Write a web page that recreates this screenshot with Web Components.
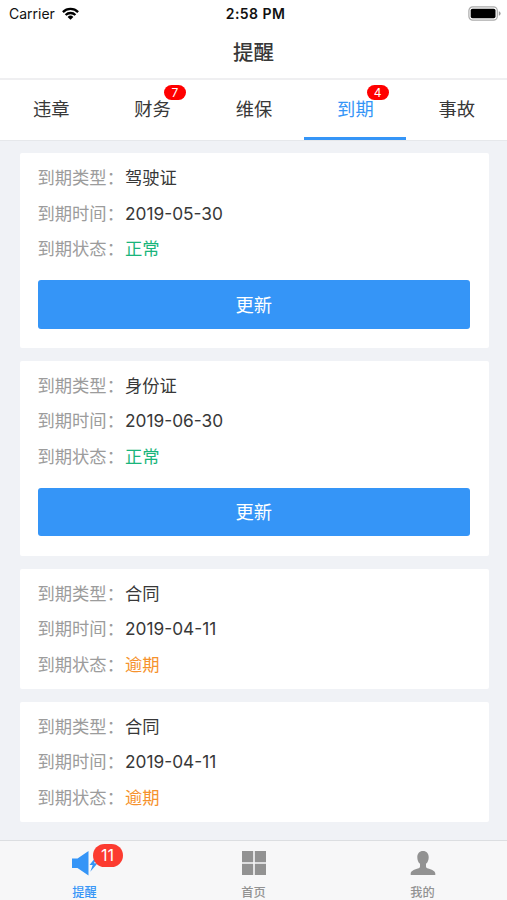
<!DOCTYPE html>
<html lang="zh-CN">
<head>
<meta charset="UTF-8">
<meta name="viewport" content="width=device-width, initial-scale=1">
<title>提醒</title>
<style>
    html, body {
        height: 100%;
        margin: 0;
    }
    body {
        font-family: Inter, "Noto Sans CJK SC", sans-serif;
        color: #383838;
        overflow: hidden;
    }
</style>
</head>
<body>
<reminder-app>
    <status-bar slot="header"></status-bar>
    <nav-title slot="header">提醒</nav-title>
    <tab-strip slot="header">
        <tab-item>违章</tab-item>
        <tab-item badge="7">财务</tab-item>
        <tab-item>维保</tab-item>
        <tab-item badge="4" active>到期</tab-item>
        <tab-item>事故</tab-item>
    </tab-strip>

    <expiry-card type="驾驶证" date="2019-05-30" status="正常" action="更新"></expiry-card>
    <expiry-card type="身份证" date="2019-06-30" status="正常" action="更新"></expiry-card>
    <expiry-card type="合同" date="2019-04-11" status="逾期" overdue></expiry-card>
    <expiry-card type="合同" date="2019-04-11" status="逾期" overdue></expiry-card>

    <bottom-bar slot="footer">
        <bottom-item icon="horn" badge="11" active>提醒</bottom-item>
        <bottom-item icon="grid">首页</bottom-item>
        <bottom-item icon="person">我的</bottom-item>
    </bottom-bar>
</reminder-app>

<script>
class ReminderApp extends HTMLElement {
    constructor() {
        super();
        this.attachShadow({ mode: 'open' });
        this.shadowRoot.innerHTML = `
            <style>
                :host {
                    display: flex;
                    flex-direction: column;
                    height: 900px;
                    background: #f0f2f6;
                }
                main {
                    flex: 1;
                    min-height: 0;
                    box-sizing: border-box;
                    display: flex;
                    flex-direction: column;
                    gap: 12.7px;
                    padding: 12.2px 18px 0 19.5px;
                }
            </style>
            <slot name="header"></slot>
            <main><slot></slot></main>
            <slot name="footer"></slot>
        `;
    }
}

class StatusBar extends HTMLElement {
    constructor() {
        super();
        this.attachShadow({ mode: 'open' });
        this.shadowRoot.innerHTML = `
            <style>
                :host {
                    display: grid;
                    grid-template-columns: 1fr auto 1fr;
                    align-items: center;
                    height: 27px;
                    padding: 0 6px 0 9px;
                    background: #fff;
                    color: #111;
                    font-size: 14px;
                    line-height: 27px;
                }
                .left {
                    display: flex;
                    align-items: center;
                    gap: 7px;
                }
                .time {
                    font-size: 14px;
                    font-weight: 600;
                    letter-spacing: 0.45px;
                    padding-left: 1px;
                }
                .battery {
                    justify-self: end;
                }
                svg {
                    display: block;
                }
            </style>
            <div class="left">
                <span>Carrier</span>
                <svg width="17" height="13" viewBox="0 0 17 13" fill="none" stroke="#000" stroke-width="2.3">
                    <path d="M.9 5.1a10.8 10.8 0 0 1 15.2 0M3.6 8a7 7 0 0 1 9.8 0"/>
                    <path d="M5.6 9.9a4.1 4.1 0 0 1 5.8 0L8.5 12.8Z" fill="#000" stroke="none"/>
                </svg>
            </div>
            <span class="time">2:58 PM</span>
            <svg class="battery" width="33" height="15" viewBox="0 0 33 15">
                <rect x=".9" y=".9" width="28.4" height="13.2" rx="3.8" fill="#fff" stroke="#aaa" stroke-width="1.2"/>
                <rect x="2.7" y="2.7" width="24.8" height="9.6" rx="1.8" fill="#000"/>
                <path d="M30.8 5.2q1.8.5 1.8 2.3t-1.8 2.3Z" fill="#999"/>
            </svg>
        `;
    }
}

class NavTitle extends HTMLElement {
    constructor() {
        super();
        this.attachShadow({ mode: 'open' });
        this.shadowRoot.innerHTML = `
            <style>
                :host {
                    display: block;
                    box-sizing: border-box;
                    height: 53px;
                    border-bottom: 2px solid #efeff1;
                    background: #fff;
                    font-size: 20.5px;
                    font-weight: 500;
                    line-height: 52px;
                    text-align: center;
                }
            </style>
            <slot></slot>
        `;
    }
}

class TabStrip extends HTMLElement {
    constructor() {
        super();
        this.attachShadow({ mode: 'open' });
        this.shadowRoot.innerHTML = `
            <style>
                :host {
                    display: grid;
                    grid-template-columns: repeat(5, 1fr);
                    grid-template-rows: 60px;
                    height: 60px;
                    border-bottom: 1px solid #e6e8eb;
                    background: #fff;
                }
            </style>
            <slot></slot>
        `;
    }
}

class TabItem extends HTMLElement {
    constructor() {
        super();
        this.attachShadow({ mode: 'open' });
        const badge = this.getAttribute('badge');
        this.shadowRoot.innerHTML = `
            <style>
                :host {
                    display: block;
                    box-sizing: border-box;
                    border-bottom: 3px solid transparent;
                    padding-left: 1px;
                    font-size: 18.3px;
                    line-height: 59px;
                    text-align: center;
                }
                :host([active]) {
                    color: #3595f7;
                    border-bottom-color: #3595f7;
                }
                .label {
                    position: relative;
                    display: inline-block;
                    height: 57px;
                }
                .badge {
                    position: absolute;
                    top: 5px;
                    right: -15px;
                    width: 22px;
                    height: 15px;
                    border-radius: 8px;
                    background: #f00;
                    color: #fff;
                    font-size: 12px;
                    line-height: 15px;
                }
            </style>
            <span class="label"><slot></slot>${badge ? `<span class="badge">${badge}</span>` : ''}</span>
        `;
    }
}

class ExpiryCard extends HTMLElement {
    constructor() {
        super();
        this.attachShadow({ mode: 'open' });
        const action = this.getAttribute('action');
        this.shadowRoot.innerHTML = `
            <style>
                :host {
                    display: block;
                    box-sizing: border-box;
                    padding: 7px 19px 7px 18px;
                    border-radius: 2px;
                    background: #fff;
                    font-size: 17.3px;
                }
                .row {
                    display: flex;
                    height: 35.5px;
                    line-height: 35.5px;
                }
                .label {
                    width: 87.5px;
                    color: #9c9c9c;
                    white-space: nowrap;
                }
                .date {
                    font-size: 17.3px;
                }
                .status {
                    color: #19b57b;
                }
                :host([overdue]) .status {
                    color: #f6922d;
                }
                button {
                    display: block;
                    width: 100%;
                    height: 48.5px;
                    margin: 13.5px 0 12.6px;
                    padding: 0 0 1.5px;
                    border: 0;
                    border-radius: 3px;
                    background: #3595f7;
                    color: #fff;
                    font: inherit;
                    font-size: 18.3px;
                }
            </style>
            <div class="row"><span class="label">到期类型：</span><span>${this.getAttribute('type')}</span></div>
            <div class="row"><span class="label">到期时间：</span><span class="date">${this.getAttribute('date')}</span></div>
            <div class="row"><span class="label">到期状态：</span><span class="status">${this.getAttribute('status')}</span></div>
            ${action ? `<button type="button">${action}</button>` : ''}
        `;
    }
}

class BottomBar extends HTMLElement {
    constructor() {
        super();
        this.attachShadow({ mode: 'open' });
        this.shadowRoot.innerHTML = `
            <style>
                :host {
                    display: grid;
                    grid-template-columns: repeat(3, 1fr);
                    height: 59px;
                    border-top: 1px solid #dcdee1;
                    background: #f7f7f8;
                }
            </style>
            <slot></slot>
        `;
    }
}

const ICONS = {
    horn: `<path d="M1 9.5h5.5L17.5 2v24.5L6.5 19H1Z"/><path d="M24.5 8.5 18.5 16h3.2l-2.4 6.8 7.2-8.6h-3.6l3.6-5.7Z"/>`,
    grid: `<path d="M2 2h11.2v11.2H2ZM14.8 2H26v11.2H14.8ZM2 14.8h11.2V26H2ZM14.8 14.8H26V26H14.8Z"/>`,
    person: `<path d="M14 2c3.6 0 5.7 2.6 5.7 6.2 0 2.8-1 5.3-2.7 6.6v2.6c0 1.1.8 1.5 2.2 2 4.3 1.5 7.1 2.5 7.1 5.2v1.4H1.7v-1.4c0-2.7 2.8-3.7 7.1-5.2 1.4-.5 2.2-.9 2.2-2v-2.6C9.3 13.500 8.3 11 8.3 8.2 8.3 4.6 10.4 2 14 2Z"/>`
};

class BottomItem extends HTMLElement {
    constructor() {
        super();
        this.attachShadow({ mode: 'open' });
        const badge = this.getAttribute('badge');
        this.shadowRoot.innerHTML = `
            <style>
                :host {
                    display: flex;
                    flex-direction: column;
                    align-items: center;
                    padding-top: 8px;
                    color: #929292;
                    font-size: 12.2px;
                    font-weight: 500;
                    line-height: 16px;
                }
                :host([active]) {
                    color: #3595f7;
                }
                .icon {
                    position: relative;
                    width: 28px;
                    height: 28px;
                    margin-bottom: 8px;
                }
                svg {
                    display: block;
                    fill: currentColor;
                }
                .badge {
                    position: absolute;
                    top: -5px;
                    left: 22px;
                    width: 30px;
                    height: 23px;
                    border-radius: 12px;
                    background: #fc3b30;
                    color: #fff;
                    font-size: 16px;
                    font-weight: 400;
                    line-height: 23px;
                    text-align: center;
                }
            </style>
            <div class="icon">
                <svg width="28" height="28" viewBox="0 0 28 28">${ICONS[this.getAttribute('icon')]}</svg>
                ${badge ? `<span class="badge">${badge}</span>` : ''}
            </div>
            <slot></slot>
        `;
    }
}

customElements.define('reminder-app', ReminderApp);
customElements.define('status-bar', StatusBar);
customElements.define('nav-title', NavTitle);
customElements.define('tab-strip', TabStrip);
customElements.define('tab-item', TabItem);
customElements.define('expiry-card', ExpiryCard);
customElements.define('bottom-bar', BottomBar);
customElements.define('bottom-item', BottomItem);
</script>
</body>
</html>
